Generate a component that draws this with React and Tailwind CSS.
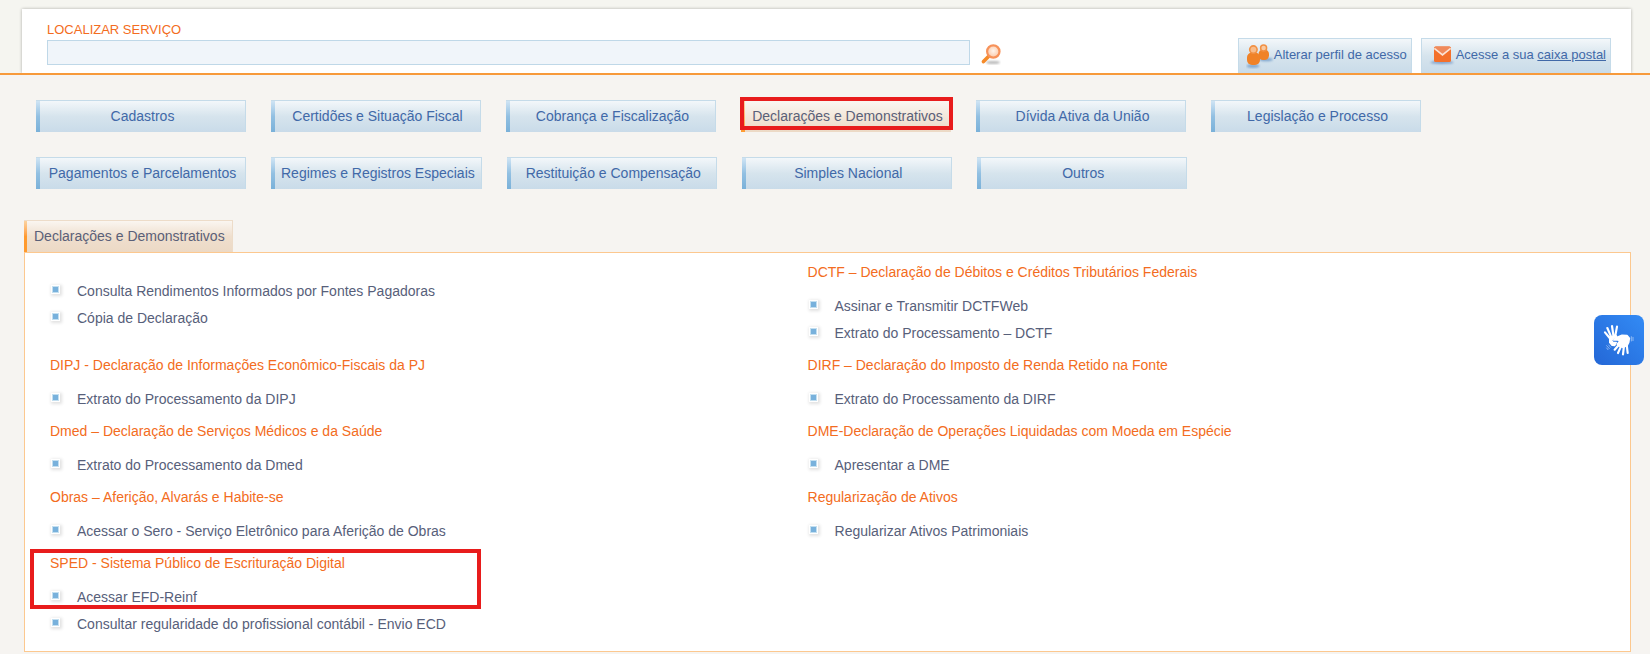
import React, { useState } from 'react';

const NAV_ROWS = [
  [
    'Cadastros',
    'Certidões e Situação Fiscal',
    'Cobrança e Fiscalização',
    'Declarações e Demonstrativos',
    'Dívida Ativa da União',
    'Legislação e Processo',
  ],
  [
    'Pagamentos e Parcelamentos',
    'Regimes e Registros Especiais',
    'Restituição e Compensação',
    'Simples Nacional',
    'Outros',
  ],
];

// Sections in reading order, two per row
const SECTIONS = [
  { id: 'geral', items: ['Consulta Rendimentos Informados por Fontes Pagadoras', 'Cópia de Declaração'] },
  {
    id: 'dctf',
    title: 'DCTF – Declaração de Débitos e Créditos Tributários Federais',
    items: ['Assinar e Transmitir DCTFWeb', 'Extrato do Processamento – DCTF'],
  },
  {
    id: 'dipj',
    title: 'DIPJ - Declaração de Informações Econômico-Fiscais da PJ',
    items: ['Extrato do Processamento da DIPJ'],
  },
  {
    id: 'dirf',
    title: 'DIRF – Declaração do Imposto de Renda Retido na Fonte',
    items: ['Extrato do Processamento da DIRF'],
  },
  {
    id: 'dmed',
    title: 'Dmed – Declaração de Serviços Médicos e da Saúde',
    items: ['Extrato do Processamento da Dmed'],
  },
  {
    id: 'dme',
    title: 'DME-Declaração de Operações Liquidadas com Moeda em Espécie',
    items: ['Apresentar a DME'],
  },
  {
    id: 'obras',
    title: 'Obras – Aferição, Alvarás e Habite-se',
    items: ['Acessar o Sero - Serviço Eletrônico para Aferição de Obras'],
  },
  { id: 'ativos', title: 'Regularização de Ativos', items: ['Regularizar Ativos Patrimoniais'] },
  {
    id: 'sped',
    title: 'SPED - Sistema Público de Escrituração Digital',
    items: ['Acessar EFD-Reinf', 'Consultar regularidade do profissional contábil - Envio ECD'],
    highlighted: true,
  },
];

const SearchIcon = () => (
  <svg width="20" height="21" viewBox="0 0 20 21" aria-hidden="true">
    <defs>
      <radialGradient id="lens" cx="0.5" cy="0.45" r="0.6">
        <stop offset="0" stopColor="#fff4ec" />
        <stop offset="1" stopColor="#fbc39f" />
      </radialGradient>
      <filter id="lensShadow" x="-30%" y="-60%" width="160%" height="220%">
        <feGaussianBlur stdDeviation="1" />
      </filter>
    </defs>
    <ellipse cx="12" cy="18.5" rx="7" ry="1.6" fill="#b9b9b9" filter="url(#lensShadow)" />
    <path d="M7.5 12.5 2.5 17.6" stroke="#f58b2a" strokeWidth="3.6" strokeLinecap="round" />
    <circle cx="12.3" cy="7.5" r="6.2" fill="url(#lens)" stroke="#f7925a" strokeWidth="2.2" />
  </svg>
);

const ProfilesIcon = () => (
  <svg width="28" height="25" viewBox="0 0 28 25" aria-hidden="true">
    <defs>
      <filter id="profileShadow" x="-40%" y="-60%" width="180%" height="220%">
        <feGaussianBlur stdDeviation="1.1" />
      </filter>
    </defs>
    <ellipse cx="7" cy="22" rx="6.5" ry="1.8" fill="#7fa6cf" filter="url(#profileShadow)" />
    <ellipse cx="20" cy="15.5" rx="7" ry="1.7" fill="#7fa6cf" filter="url(#profileShadow)" />
    <rect x="12.5" y="5.5" width="10.5" height="10.5" rx="4.6" fill="#f08227" />
    <circle cx="17.6" cy="3.9" r="3" fill="#f9c9a0" stroke="#f19044" strokeWidth="1.5" />
    <rect x="1" y="8.5" width="13" height="12.5" rx="5" fill="#f08227" />
    <circle cx="7.4" cy="5.6" r="3.7" fill="#f8bd8c" stroke="#f19044" strokeWidth="1.6" />
  </svg>
);

const MailIcon = () => (
  <svg width="26" height="20" viewBox="0 0 26 20" aria-hidden="true">
    <defs>
      <filter id="mailShadow" x="-30%" y="-80%" width="160%" height="260%">
        <feGaussianBlur stdDeviation="1.1" />
      </filter>
    </defs>
    <ellipse cx="13" cy="16.4" rx="11.5" ry="1.7" fill="#7f9fc9" filter="url(#mailShadow)" />
    <rect x="5" y="0.5" width="17" height="15.5" rx="1.6" fill="#f4702a" />
    <path d="M5.3 1.5 13.5 8.5 21.7 1.5Q21 0.500 20 0.500H7Q6 0.500 5.300 1.500Z" fill="#f08a5c" />
    <path d="M5.3 2.3 13.5 9 21.7 2.3" fill="none" stroke="#fbe3d6" strokeWidth="1.7" />
  </svg>
);

const SignLanguageIcon = () => (
  <svg width="50" height="50" viewBox="0 0 150 150" aria-hidden="true">
    <g stroke="#fff" strokeLinecap="round" strokeLinejoin="round" fill="none">
      <path d="M47 69 33 52M50 62 40 39M58 60 54 33M64 62 69 35" strokeWidth="6.5" />
      <path d="M47 66 65 61 68 64 58 70 53 76 57 82 67 82 62 92 54 91 47 83Z" fill="#fff" strokeWidth="4" />
      <path d="M76 88 62 104M82 92 72 114M90 92 87 118M98 88 101 114" strokeWidth="6.5" />
      <path
        d="M59 75 66 68 84 61 99 62 106 70 104 82 99 92 86 97 74 92 70 88 79 76 70 75Z"
        fill="#fff"
        strokeWidth="5"
      />
      <path d="M112 65V78M117 67V77M38 92 46 101M38 99 42 104M44 90 50 97" strokeWidth="2" opacity="0.7" />
    </g>
  </svg>
);

const Bullet = () => (
  <span className="flex size-[13px] shrink-0 p-px" aria-hidden="true">
    <span className="flex size-[9px] items-center justify-center bg-white shadow-[1px_1px_3px_1px_rgba(0,0,0,0.12)]">
      <span className="size-[7px] border border-[#c3dff0] bg-[#78b1dc]" />
    </span>
  </span>
);

const NavButton = ({ label, active, onSelect }) => (
  <div className="relative">
    <button
      type="button"
      onClick={() => onSelect(label)}
      className={`flex h-8 min-w-[210px] cursor-pointer border-t border-r ${
        active ? 'border-[#eddcc9] text-[#5a6078]' : 'border-[#c5dbe9] text-[#4169a8]'
      }`}
    >
      <span
        className={`w-1 self-stretch bg-linear-to-b ${
          active ? 'from-[#fbd3a0] to-[#ff9a2e]' : 'from-[#cfe4f4] via-[#92c0e2] to-[#7ab1d9]'
        }`}
      />
      <span
        className={`flex grow items-center justify-center self-stretch bg-linear-to-b px-[6px] pb-[2px] ${
          active ? 'from-[#faf6f1] to-[#ecd9c5]' : 'from-[#f3f7fa] via-[#d6e4ed] to-[#c9dbe9]'
        }`}
      >
        {label}
      </span>
    </button>
    {active && (
      <span className="pointer-events-none absolute -top-[3px] -right-[2px] bottom-[2px] -left-px border-4 border-[#e81c1c]" />
    )}
  </div>
);

const ServiceSection = ({ section }) => (
  <section className="relative pl-[25px]">
    {section.title ? (
      <h3 className="flex h-9 items-center text-[#f36c21]">{section.title}</h3>
    ) : (
      <div className="h-[21px]" />
    )}
    <ul className="pt-[2px] pb-px">
      {section.items.map((item) => (
        <li key={item} className="flex h-[27px] items-center gap-[14px]">
          <Bullet />
          <a href="#" className="text-[#57607a]">
            {item}
          </a>
        </li>
      ))}
    </ul>
    {section.highlighted && (
      <span className="pointer-events-none absolute top-1 left-[5px] h-[60px] w-[451px] border-4 border-[#e81c1c]" />
    )}
  </section>
);

export default function App() {
  const [search, setSearch] = useState('');
  const [selected, setSelected] = useState('Declarações e Demonstrativos');

  return (
    <div className="min-h-screen bg-[#f6f4f1] font-['Liberation_Sans',Arial,sans-serif] text-sm">
      {/* Search and account shortcuts */}
      <header className="border-b-2 border-[#f79a3b] bg-[#f5f5f0] pt-[9px] pr-[19px] pl-[22px]">
        <div className="flex h-16 justify-between bg-white pr-5 pl-[25px] shadow-[0_0_3px_rgba(0,0,0,0.3)] [clip-path:inset(-4px_-4px_0_-4px)]">
          <form className="w-[61%] pt-3" onSubmit={(e) => e.preventDefault()}>
            <label htmlFor="service-search" className="block text-[13px] leading-[18px] text-[#f36c21]">
              LOCALIZAR SERVIÇO
            </label>
            <div className="mt-px flex gap-[11px]">
              <input
                id="service-search"
                type="text"
                value={search}
                onChange={(e) => setSearch(e.target.value)}
                className="h-[25px] min-w-0 grow border border-[#bfd8e8] bg-[#f0f5fa] px-2 outline-none"
              />
              <button type="submit" aria-label="Localizar" className="mt-1 cursor-pointer">
                <SearchIcon />
              </button>
            </div>
          </form>

          <div className="flex items-end gap-[9px] text-[13px] text-[#4169a8]">
            <button
              type="button"
              className="flex h-[35px] cursor-pointer items-center border border-b-0 border-[#c5dbe9] bg-linear-to-b from-[#f3f7fa] via-[#d6e4ed] to-[#c9dbe9] pr-1 pl-[7px]"
            >
              <ProfilesIcon />
              <span className="pb-[2px]">Alterar perfil de acesso</span>
            </button>
            <div className="flex h-[35px] items-center gap-px border border-b-0 border-[#c5dbe9] bg-linear-to-b from-[#f3f7fa] via-[#d6e4ed] to-[#c9dbe9] pr-1 pl-[7px]">
              <MailIcon />
              <span className="pb-[2px]">
                Acesse a sua{' '}
                <a href="#" className="underline">
                  caixa postal
                </a>
              </span>
            </div>
          </div>
        </div>
      </header>

      <nav className="flex flex-col gap-[25px] pt-[25px] pl-9">
        {NAV_ROWS.map((row) => (
          <div key={row[0]} className="flex gap-[25px]">
            {row.map((label) => (
              <NavButton key={label} label={label} active={label === selected} onSelect={setSelected} />
            ))}
          </div>
        ))}
      </nav>

      <main className="mt-[31px] mr-[19px] ml-6">
        <h2 className="flex h-8 w-fit border-t border-r border-[#eddcc9] text-[#5a6078]">
          <span className="w-[3px] bg-linear-to-b from-[#fbd3a0] via-[#ff9a2e] to-[#ff9a2e]" />
          <span className="flex items-center bg-linear-to-b from-[#faf6f1] via-[#efdfce] to-[#ecd9c5] px-[7px] pb-[2px]">
            {selected}
          </span>
        </h2>
        <div className="grid grid-cols-[758fr_848fr] border border-[#fcc88f] bg-white pt-px pb-[13px]">
          {SECTIONS.map((section) => (
            <ServiceSection key={section.id} section={section} />
          ))}
        </div>
      </main>

      {/* Accessibility widget floats over the page */}
      <button
        type="button"
        aria-label="Conteúdo acessível em Libras"
        className="fixed top-[315px] right-[6px] size-[50px] cursor-pointer rounded-lg bg-linear-to-tr from-[#2467d6] to-[#338bf5]"
      >
        <SignLanguageIcon />
      </button>
    </div>
  );
}
